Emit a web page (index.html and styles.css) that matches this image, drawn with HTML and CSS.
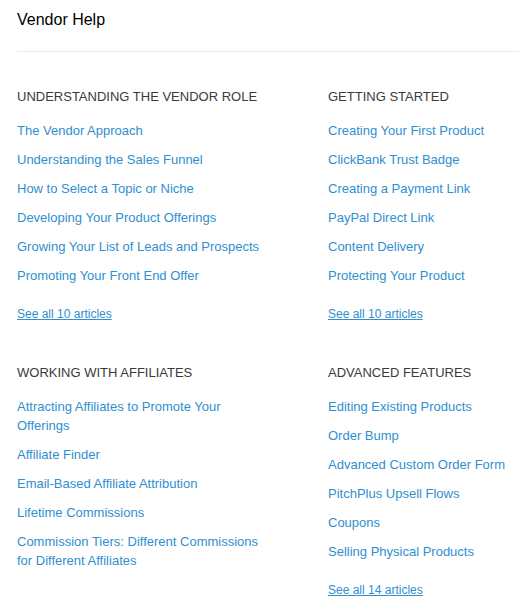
FILE: index.html
```html
<!DOCTYPE html>
<html>
<head>
<meta charset="utf-8">
<link rel="stylesheet" href="styles.css">
</head>
<body>
<div class="page">
  <h1 class="title">Vendor Help</h1>
  <div class="grid">
    <section class="cat">
      <h2 class="cat-title">UNDERSTANDING THE VENDOR ROLE</h2>
      <ul class="links">
        <li><a href="#">The Vendor Approach</a></li>
        <li><a href="#">Understanding the Sales Funnel</a></li>
        <li><a href="#">How to Select a Topic or Niche</a></li>
        <li><a href="#">Developing Your Product Offerings</a></li>
        <li><a href="#">Growing Your List of Leads and Prospects</a></li>
        <li><a href="#">Promoting Your Front End Offer</a></li>
      </ul>
      <a class="see-all" href="#">See all 10 articles</a>
    </section>
    <section class="cat">
      <h2 class="cat-title">GETTING STARTED</h2>
      <ul class="links">
        <li><a href="#">Creating Your First Product</a></li>
        <li><a href="#">ClickBank Trust Badge</a></li>
        <li><a href="#">Creating a Payment Link</a></li>
        <li><a href="#">PayPal Direct Link</a></li>
        <li><a href="#">Content Delivery</a></li>
        <li><a href="#">Protecting Your Product</a></li>
      </ul>
      <a class="see-all" href="#">See all 10 articles</a>
    </section>
    <section class="cat">
      <h2 class="cat-title">WORKING WITH AFFILIATES</h2>
      <ul class="links">
        <li><a href="#">Attracting Affiliates to Promote Your Offerings</a></li>
        <li><a href="#">Affiliate Finder</a></li>
        <li><a href="#">Email-Based Affiliate Attribution</a></li>
        <li><a href="#">Lifetime Commissions</a></li>
        <li><a href="#">Commission Tiers: Different Commissions for Different Affiliates</a></li>
      </ul>
    </section>
    <section class="cat">
      <h2 class="cat-title">ADVANCED FEATURES</h2>
      <ul class="links">
        <li><a href="#">Editing Existing Products</a></li>
        <li><a href="#">Order Bump</a></li>
        <li><a href="#">Advanced Custom Order Form</a></li>
        <li><a href="#">PitchPlus Upsell Flows</a></li>
        <li><a href="#">Coupons</a></li>
        <li><a href="#">Selling Physical Products</a></li>
      </ul>
      <a class="see-all" href="#">See all 14 articles</a>
    </section>
  </div>
</div>
</body>
</html>
```

FILE: styles.css
```css
html, body {
  margin: 0;
  padding: 0;
  background: #fff;
}
body {
  font-family: "Liberation Sans", Arial, Helvetica, sans-serif;
  color: #333;
}
.page {
  padding-left: 17px;
}
.title {
  margin: 0;
  padding-top: 10px;
  box-sizing: border-box;
  height: 52px;
  font-size: 16px;
  line-height: 20px;
  font-weight: normal;
  color: #000;
  border-bottom: 1px solid #ebebeb;
}
.grid {
  display: grid;
  grid-template-columns: 311px 1fr;
  padding-top: 35px;
}
.cat {
  padding-bottom: 39px;
}
.cat:nth-child(odd) {
  padding-right: 58px;
}
.cat-title {
  margin: 0 0 15px 0;
  font-size: 13px;
  line-height: 19px;
  font-weight: normal;
  color: #3a3a3a;
}
.links {
  list-style: none;
  margin: 0;
  padding: 0;
}
.links li {
  font-size: 13px;
  line-height: 19px;
  margin-bottom: 10px;
}
.links a {
  color: #2f8fcf;
  text-decoration: none;
}
.see-all {
  display: inline-block;
  margin-top: 10px;
  font-size: 12px;
  line-height: 19px;
  color: #2f8fcf;
  text-decoration: underline;
}
```
